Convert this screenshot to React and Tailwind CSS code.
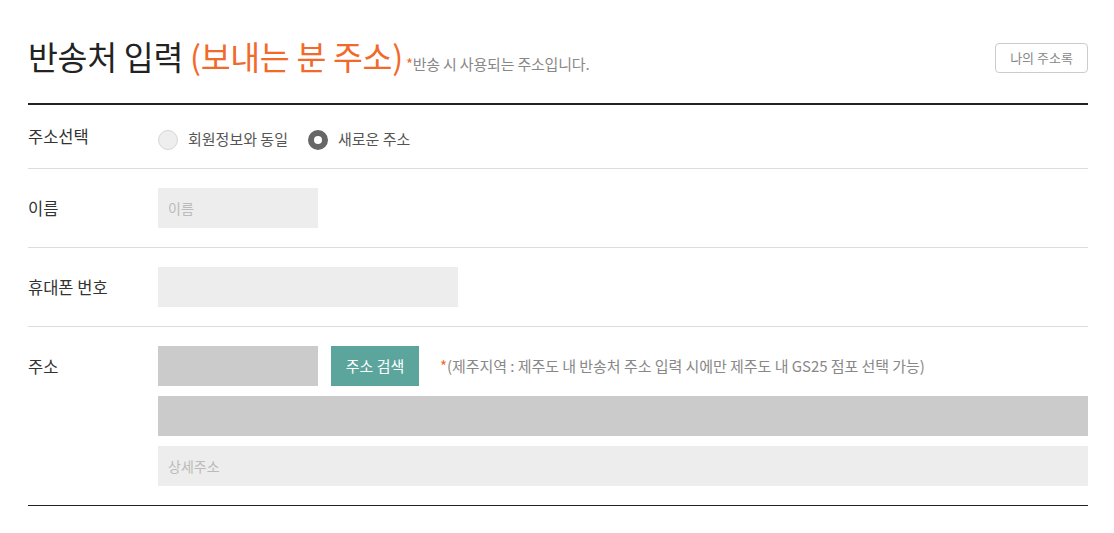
import React from 'react';

function Row({ label, children, className = '' }) {
  return (
    <div className={`flex border-b border-[#dcdcdc] ${className}`}>
      <div className="w-[130px] shrink-0 text-[16.5px] text-[#333] leading-[40px]">{label}</div>
      <div className="flex-1">{children}</div>
    </div>
  );
}

function Radio({ checked, label }) {
  return (
    <label className="flex items-center gap-[10px] text-[15px] text-[#555]">
      {checked ? (
        <span className="w-[20px] h-[20px] rounded-full bg-[#666] flex items-center justify-center">
          <span className="w-[8px] h-[8px] rounded-full bg-white" />
        </span>
      ) : (
        <span className="w-[20px] h-[20px] rounded-full bg-[#eee] border border-[#d6d6d6]" />
      )}
      {label}
    </label>
  );
}

export default function App() {
  return (
    <div className="bg-white w-[1114px] h-[533px] pl-[28px] pr-[26px] pt-[34px] font-['Noto_Sans_CJK_KR',sans-serif]">
      <div className="flex items-end justify-between pb-[25px] border-b-2 border-[#222]">
        <div className="flex items-end">
          <h2 className="text-[32.5px] leading-[44px] text-[#222] tracking-[-0.3px]">
            반송처 입력 <span className="text-[#f26a2a]">(보내는 분 주소)</span>
          </h2>
          <p className="text-[15px] text-[#888] mb-[3px] ml-[3px] tracking-[-0.2px]">
            <span className="text-[#f26a2a]">*</span>반송 시 사용되는 주소입니다.
          </p>
        </div>
        <button className="w-[93px] h-[30px] border border-[#ccc] rounded-[4px] text-[13px] text-[#888] mb-[5px]">
          나의 주소록
        </button>
      </div>

      <Row label="주소선택" className="h-[64px] pt-[11px]">
        <div className="flex items-center gap-[20px] h-[45px] pt-[2px]">
          <Radio label="회원정보와 동일" />
          <Radio checked label="새로운 주소" />
        </div>
      </Row>

      <Row label="이름" className="pt-[19px] pb-[19px]">
        <input
          className="w-[160px] h-[40px] bg-[#ededed] px-[10px] text-[14px] placeholder:text-[#bbb] outline-none"
          placeholder="이름"
        />
      </Row>

      <Row label="휴대폰 번호" className="pt-[19px] pb-[19px]">
        <input className="w-[300px] h-[40px] bg-[#ededed] px-[10px] text-[14px] outline-none" />
      </Row>

      <div className="flex border-b border-[#222] pt-[19px] pb-[19px]">
        <div className="w-[130px] shrink-0 text-[16.5px] text-[#333] leading-[40px]">주소</div>
        <div className="flex-1 flex flex-col gap-[10px]">
          <div className="flex items-center">
            <input className="w-[160px] h-[40px] bg-[#cbcbcb] outline-none" />
            <button className="ml-[13px] w-[88px] h-[40px] bg-[#5ba59d] text-white text-[15px]">주소 검색</button>
            <p className="ml-[21px] text-[15px] text-[#888] tracking-[-0.05px]">
              <span className="text-[#f26a2a]">*</span>(제주지역 : 제주도 내 반송처 주소 입력 시에만 제주도 내 GS25 점포 선택 가능)
            </p>
          </div>
          <input className="w-full h-[40px] bg-[#cbcbcb] outline-none" />
          <input
            className="w-full h-[40px] bg-[#ededed] px-[10px] text-[14px] placeholder:text-[#bbb] outline-none"
            placeholder="상세주소"
          />
        </div>
      </div>
    </div>
  );
}
